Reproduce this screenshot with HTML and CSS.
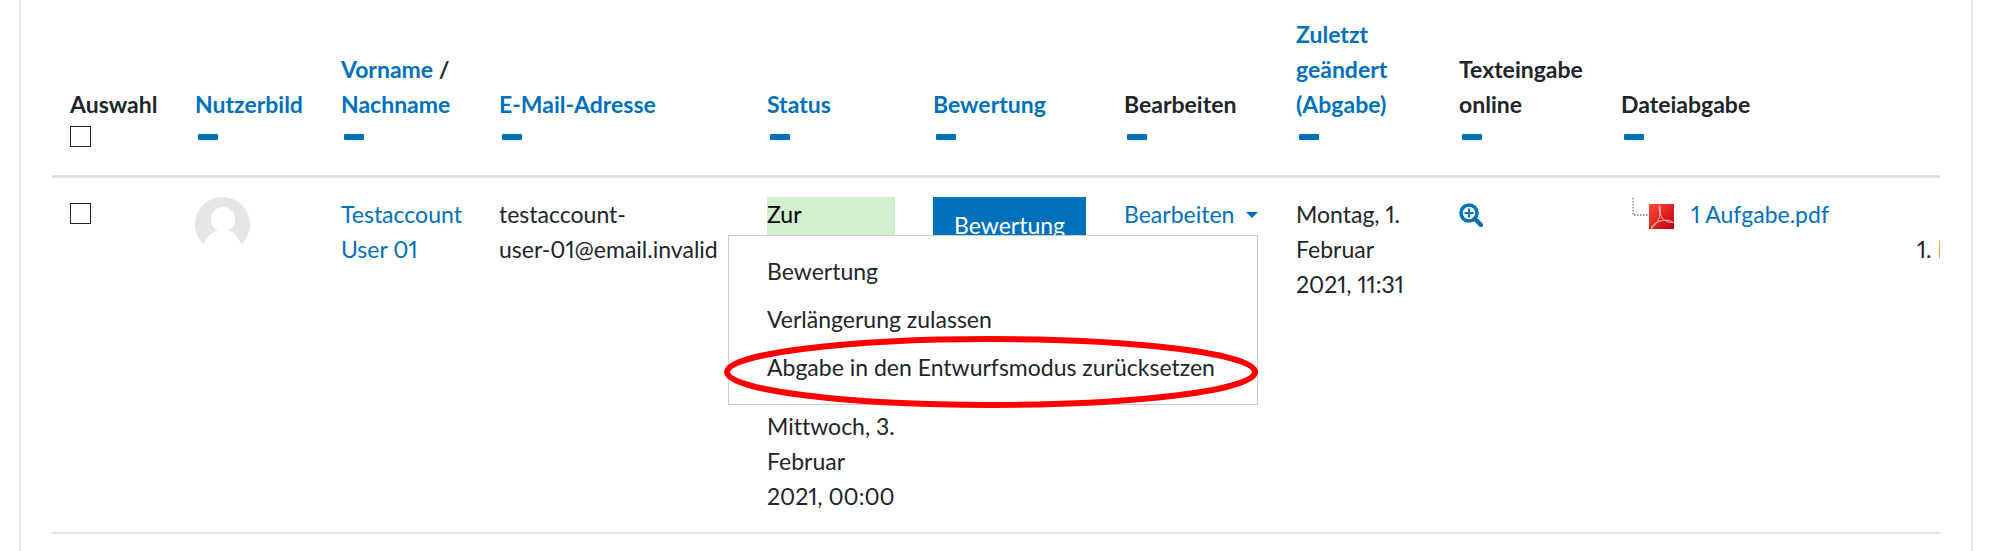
FILE: index.html
```html
<!doctype html>
<html lang="de">
    <head>
        <meta charset="UTF-8" />
        <meta name="viewport" content="width=device-width, initial-scale=1.0" />
        <title>Abgaben</title>
        <link rel="stylesheet" href="styles.css">
    </head>
    <body>
        <svg class="sprite" aria-hidden="true">
            <symbol id="minus" viewBox="0 0 20 6">
                <rect width="20" height="6" rx="1" fill="currentColor" />
            </symbol>
        </svg>
        <main class="region">
            <div class="no-overflow">
                <table class="submissions">
                    <colgroup>
                        <col class="col-select" />
                        <col class="col-picture" />
                        <col class="col-name" />
                        <col class="col-email" />
                        <col class="col-status" />
                        <col class="col-grade" />
                        <col class="col-edit" />
                        <col class="col-modified" />
                        <col class="col-text" />
                        <col class="col-files" />
                        <col class="col-comment" />
                    </colgroup>
                    <thead>
                        <tr>
                            <th>
                                <label for="selectall">Auswahl</label>
                                <div class="commands"><input type="checkbox" id="selectall" /></div>
                            </th>
                            <th>
                                <a href="#">Nutzerbild</a>
                                <div class="commands"><a href="#" aria-label="Nutzerbild verbergen"><svg class="minus"><use href="#minus" /></svg></a></div>
                            </th>
                            <th>
                                <a href="#">Vorname</a> / <a href="#">Nachname</a>
                                <div class="commands"><a href="#" aria-label="Name verbergen"><svg class="minus"><use href="#minus" /></svg></a></div>
                            </th>
                            <th>
                                <a href="#">E-Mail-Adresse</a>
                                <div class="commands"><a href="#" aria-label="E-Mail-Adresse verbergen"><svg class="minus"><use href="#minus" /></svg></a></div>
                            </th>
                            <th>
                                <a href="#">Status</a>
                                <div class="commands"><a href="#" aria-label="Status verbergen"><svg class="minus"><use href="#minus" /></svg></a></div>
                            </th>
                            <th>
                                <a href="#">Bewertung</a>
                                <div class="commands"><a href="#" aria-label="Bewertung verbergen"><svg class="minus"><use href="#minus" /></svg></a></div>
                            </th>
                            <th>
                                Bearbeiten
                                <div class="commands"><a href="#" aria-label="Bearbeiten verbergen"><svg class="minus"><use href="#minus" /></svg></a></div>
                            </th>
                            <th>
                                <a href="#">Zuletzt geändert (Abgabe)</a>
                                <div class="commands"><a href="#" aria-label="Zuletzt geändert verbergen"><svg class="minus"><use href="#minus" /></svg></a></div>
                            </th>
                            <th>
                                Texteingabe online
                                <div class="commands"><a href="#" aria-label="Texteingabe verbergen"><svg class="minus"><use href="#minus" /></svg></a></div>
                            </th>
                            <th>
                                Dateiabgabe
                                <div class="commands"><a href="#" aria-label="Dateiabgabe verbergen"><svg class="minus"><use href="#minus" /></svg></a></div>
                            </th>
                            <th></th>
                        </tr>
                    </thead>
                    <tbody>
                        <tr>
                            <td><input type="checkbox" class="select-user" aria-label="Testaccount User 01 auswählen" /></td>
                            <td>
                                <a href="#" aria-label="Testaccount User 01">
                                    <svg class="userpicture" viewBox="0 0 55 55">
                                        <circle cx="27.5" cy="27.5" r="27.5" fill="#e5e5e5" />
                                        <path d="M0 55V47H9C12 39 17 35 23 33.500A12.300 12.300 0 1 1 33 33.500C39 35 43 39 46 47H55V55Z" fill="#fff" />
                                    </svg>
                                </a>
                            </td>
                            <td><a href="#">Testaccount User 01</a></td>
                            <td class="email">testaccount-<br />user-01@email.invalid</td>
                            <td>
                                <div class="submitted">Zur</div>
                                <div class="extension">Mittwoch, 3. Februar 2021, 00:00</div>
                            </td>
                            <td><a href="#" class="btn">Bewertung</a></td>
                            <td>
                                <div class="action-menu">
                                    <button type="button" class="toggle" aria-expanded="true">Bearbeiten</button>
                                    <div class="dropdown-menu">
                                        <a href="#">Bewertung</a>
                                        <a href="#">Verlängerung zulassen</a>
                                        <a href="#">Abgabe in den Entwurfsmodus zurücksetzen</a>
                                        <svg class="highlight" viewBox="0 0 534 72">
                                            <ellipse cx="267" cy="36" rx="264" ry="33" fill="none" stroke="#f00" stroke-width="6" />
                                        </svg>
                                    </div>
                                </div>
                            </td>
                            <td>Montag, 1. Februar 2021, 11:31</td>
                            <td>
                                <a href="#" aria-label="Texteingabe anzeigen">
                                    <svg class="zoom" viewBox="0 0 24 24" fill="none" stroke="currentColor">
                                        <circle cx="10" cy="10" r="8" stroke-width="3.500" />
                                        <path d="M16 16L22 22" stroke-width="4.500" stroke-linecap="round" />
                                        <path d="M10 5.500V14.500M5.500 10H14.500" stroke-width="2" />
                                    </svg>
                                </a>
                            </td>
                            <td>
                                <div class="file">
                                    <svg class="branch" viewBox="0 0 17 18">
                                        <path d="M1 0V17H17" fill="none" stroke="#777" stroke-width="1.300" stroke-dasharray="1.500 1.500" />
                                    </svg>
                                    <svg class="pdf" viewBox="0 0 25 25">
                                        <defs>
                                            <linearGradient id="red" x1="0" y1="0" x2="1" y2="1">
                                                <stop offset="0" stop-color="#ff4b3c" />
                                                <stop offset=".5" stop-color="#e8221f" />
                                                <stop offset="1" stop-color="#b8000c" />
                                            </linearGradient>
                                        </defs>
                                        <rect width="25" height="25" fill="url(#red)" />
                                        <path d="M10.500 1.500C9.500 5 10.500 9 12.500 13C14.500 16 19 19 24 18.500C23 16 16 15.500 9.500 17.500C6 19 3 21.500 2 24C5 23.500 9.500 17 10.800 11.500C11.700 7 11.700 4 10.500 1.500Z" fill="none" stroke="#f5c4c0" stroke-width="1" stroke-linejoin="round" />
                                    </svg>
                                    <a href="#">1 Aufgabe.pdf</a>
                                </div>
                            </td>
                            <td class="comment"><br />1. F</td>
                        </tr>
                    </tbody>
                </table>
            </div>
        </main>
    </body>
</html>
```
FILE: styles.css
```css
body {
    margin: 0;
    background: #fff;
    color: #212529;
    font-family: Lato, "Noto Sans", sans-serif;
    font-size: 23px;
    font-variant-ligatures: none;
    font-variant-numeric: proportional-nums;
    line-height: 35px;
}
a {
    color: #0070bb;
    text-decoration: none;
}
svg {
    display: block;
}
.sprite {
    display: none;
}
.region {
    box-sizing: border-box;
    min-height: 100vh;
    margin: 0 17px 0 19px;
    padding: 0 31px;
    border: solid #e3e5e7;
    border-width: 0 2px;
}
.no-overflow {
    overflow: hidden;
}
.submissions {
    width: 2100px;
    table-layout: fixed;
    border-collapse: separate;
    border-spacing: 0;
}
.col-select {
    width: 125px;
}
.col-picture {
    width: 146px;
}
.col-name {
    width: 158px;
}
.col-email {
    width: 268px;
}
.col-status {
    width: 166px;
}
.col-grade {
    width: 191px;
}
.col-edit {
    width: 172px;
}
.col-modified {
    width: 163px;
}
.col-text {
    width: 162px;
}
.col-files {
    width: 296px;
}
th,
td {
    padding: 18px;
    text-align: left;
}
th {
    padding-top: 17px;
    vertical-align: bottom;
    border-bottom: 3px solid #dee2e6;
}
td {
    padding-top: 19px;
    vertical-align: top;
    border-bottom: 2px solid #e3e6e9;
}
.commands {
    display: flex;
    align-items: flex-start;
    height: 35px;
}
.minus {
    width: 20px;
    height: 6px;
    margin: 12px 3px 0;
}
input[type="checkbox"] {
    appearance: none;
    display: block;
    box-sizing: border-box;
    width: 21px;
    height: 21px;
    margin: 4px 0 0;
    border: 1px solid #222;
    background: #fff;
}
input.select-user[type="checkbox"] {
    margin-top: 6px;
}
.userpicture {
    width: 55px;
    height: 55px;
}
.email,
.comment {
    white-space: nowrap;
}
.submitted {
    height: 105px;
    margin-right: 2px;
    background: #cfefcf;
    color: #000;
}
.extension {
    padding-top: 107px;
}
.btn {
    display: inline-block;
    padding: 11px 21px;
    background: #0070bb;
    color: #fff;
}
.action-menu {
    position: relative;
}
.toggle {
    display: flex;
    align-items: center;
    justify-content: space-between;
    width: 100%;
    padding: 0;
    border: none;
    background: none;
    color: #0070bb;
    font: inherit;
    cursor: pointer;
}
.toggle::after {
    content: "";
    margin-right: 2px;
    border: 6px solid transparent;
    border-top-color: currentColor;
    border-bottom: none;
}
.dropdown-menu {
    position: absolute;
    top: 38px;
    right: 2px;
    z-index: 1;
    box-sizing: border-box;
    min-width: 530px;
    padding: 12px 0;
    border: 1px solid #ccc;
    background: #fff;
}
.dropdown-menu a {
    display: block;
    padding: 6px 38px 7px;
    color: #212529;
    white-space: nowrap;
}
.highlight {
    position: absolute;
    top: 100px;
    right: -1px;
    width: 534px;
    height: 72px;
    pointer-events: none;
}
.zoom {
    width: 24px;
    height: 24px;
    margin-top: 6px;
}
.file {
    display: flex;
    align-items: flex-start;
    padding-left: 11px;
}
.branch {
    width: 17px;
    height: 18px;
    margin-top: 1px;
}
.pdf {
    width: 25px;
    height: 25px;
    margin: 7px 17px 0 0;
}
```
